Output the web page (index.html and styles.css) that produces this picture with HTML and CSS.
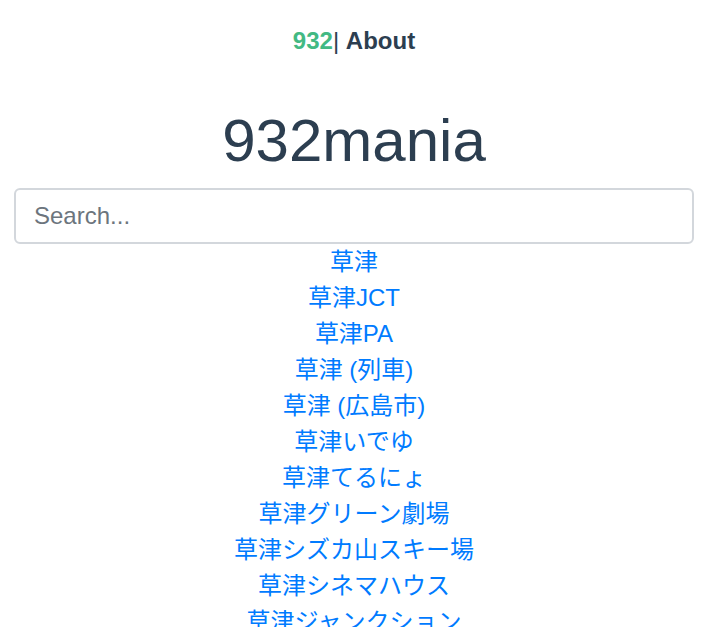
FILE: index.html
```html
<!DOCTYPE html>
<html lang="ja">
<head>
<meta charset="utf-8">
<title>932mania</title>
<link rel="stylesheet" href="styles.css">
</head>
<body>
<div class="app">
  <nav class="nav"><a class="nav-link active" href="#">932</a>| <a class="nav-link" href="#">About</a></nav>
  <h1 class="title">932mania</h1>
  <div class="search-wrap">
    <input class="search" type="text" placeholder="Search...">
  </div>
  <ul class="results">
    <li><a href="#">草津</a></li>
    <li><a href="#">草津JCT</a></li>
    <li><a href="#">草津PA</a></li>
    <li><a href="#">草津 (列車)</a></li>
    <li><a href="#">草津 (広島市)</a></li>
    <li><a href="#">草津いでゆ</a></li>
    <li><a href="#">草津てるにょ</a></li>
    <li><a href="#">草津グリーン劇場</a></li>
    <li><a href="#">草津シズカ山スキー場</a></li>
    <li><a href="#">草津シネマハウス</a></li>
    <li><a href="#">草津ジャンクション</a></li>
  </ul>
</div>
</body>
</html>
```
FILE: styles.css
```css
html, body {
  margin: 0;
  padding: 0;
  background: #fff;
}
body {
  font-family: "Liberation Sans", Arial, "Noto Sans CJK JP", sans-serif;
  font-size: 24px;
  line-height: 1.5;
  color: #2c3e50;
  text-align: center;
}
.app {
  overflow: hidden;
  height: 627px;
  padding: 0 16px 0 14px;
}
.nav {
  padding: 23px 0 0;
}
.nav-link {
  color: #2c3e50;
  font-weight: bold;
  text-decoration: none;
}
.nav-link.active {
  color: #42b983;
}
.title {
  margin: 46px 0 11px;
  font-size: 60px;
  font-weight: 500;
  line-height: 1.2;
  color: #2c3e50;
}
.search {
  display: block;
  box-sizing: border-box;
  width: 100%;
  height: 56px;
  padding: 9px 18px;
  font-family: "Liberation Sans", Arial, sans-serif;
  font-size: 24px;
  line-height: 1.5;
  color: #495057;
  background: #fff;
  border: 2px solid #d3d7dc;
  border-radius: 6px;
  outline: none;
}
.search::placeholder {
  color: #6c757d;
  opacity: 1;
}
.results {
  list-style: none;
  margin: 0;
  padding: 0;
}
.results li {
  line-height: 36px;
}
.results a {
  color: #007bff;
  text-decoration: none;
}
```
